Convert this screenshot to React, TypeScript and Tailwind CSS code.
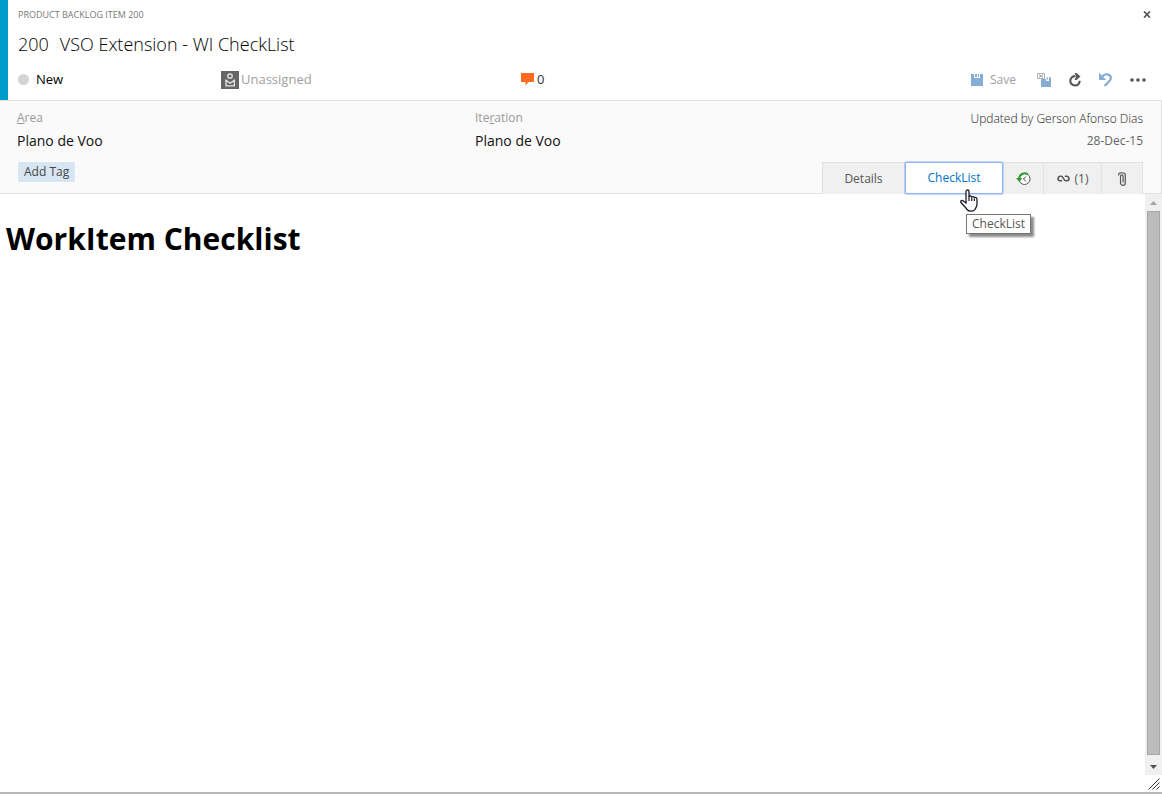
import React from "react";

function UnassignedIcon() {
  return (
    <svg className="size-[18px] shrink-0" viewBox="0 0 18 18" aria-hidden="true">
      <rect width="18" height="18" fill="#666" />
      <circle cx="9" cy="5" r="2.2" fill="none" stroke="#e8e8e8" strokeWidth="1.3" />
      <path d="M5 9.300v5.500h8.300V9.300L9.100 12.200z" fill="none" stroke="#e8e8e8" strokeWidth="1.3" />
    </svg>
  );
}

function CommentIcon() {
  return (
    <svg className="h-[13px] w-[14px] shrink-0" viewBox="0 0 14 13" aria-hidden="true">
      <path d="M0 0h13v9H7.500L4.500 12.500V9H0z" fill="#ff6a1f" />
    </svg>
  );
}

function SaveIcon() {
  return (
    <svg className="size-3" viewBox="0 0 12 12" shapeRendering="crispEdges" aria-hidden="true">
      <path d="M0 0h3v4h6V0h2l1 1v11H0z" fill="#86add3" />
      <path d="M4 0h2v3H4zM7 0h1v3H7z" fill="#86add3" />
      <path d="M6 0h1v2H6z" fill="#fff" />
    </svg>
  );
}

function SaveCloseIcon() {
  return (
    <svg className="size-[14px]" viewBox="0 0 14 14" aria-hidden="true">
      <path d="M4 6h5v2h3V4h1l1 1v9H4z" fill="#86add3" />
      <path d="M9.500 4.500h1.500v2H9.500z" fill="#86add3" />
      <path d="M.5.500h7v5h-7z" fill="#fff" stroke="#b0b0b0" />
      <path d="M2 1.500l4 3M6 1.500l-4 3" stroke="#a0a0a0" />
    </svg>
  );
}

function RefreshIcon() {
  return (
    <svg className="size-[14px]" viewBox="0 0 14 14" aria-hidden="true">
      <path d="M7.500 3.200A4.700 4.700 0 1 0 11.700 7.800" fill="none" stroke="#555" strokeWidth="2.100" />
      <path d="M6.500 0H8.500L12.500 3.400 8.500 7H6.500L8.300 3.500z" fill="#555" />
    </svg>
  );
}

function UndoIcon() {
  return (
    <svg className="size-[14px]" viewBox="0 0 14 14" aria-hidden="true">
      <path d="M2.500 4.300C5 1.200 8.500.500 10.600 2.300c2.100 1.800 1.400 4-.4 5.900L5.500 13" fill="none" stroke="#86add3" strokeWidth="2.300" />
      <path d="M.5.500V6.500H6.500L4.500 4.800 2.500 3z" fill="#86add3" stroke="#86add3" />
    </svg>
  );
}

function HistoryIcon() {
  return (
    <svg className="h-[14px] w-[15px]" viewBox="0 0 15 14" aria-hidden="true">
      <circle cx="8.500" cy="7" r="5.500" fill="#fff" stroke="#555" />
      <path d="M12 2.500A5.500 5.500 0 0 0 3.200 7" fill="none" stroke="#339933" strokeWidth="2" />
      <path d="M0 6h6.500L3.300 10z" fill="#339933" />
      <path d="M10 4.500L7.500 7 10 9.500" fill="none" stroke="#444" />
    </svg>
  );
}

function LinkIcon() {
  return (
    <svg className="h-[7px] w-[13px]" viewBox="0 0 13 7" aria-hidden="true">
      <path
        d="M5.200 5.700H3.200A2.200 2.200 0 0 1 3.200 1.300H4.300C6.500 1.300 6.500 5.700 8.700 5.700H9.800A2.200 2.200 0 0 0 9.800 1.300H7.800"
        fill="none"
        stroke="#555"
        strokeWidth="1.600"
      />
    </svg>
  );
}

function PaperclipIcon() {
  return (
    <svg className="h-[14px] w-2" viewBox="0 0 8 14" aria-hidden="true">
      <path d="M.7 3.500V2.200C.7.200 7.300.200 7.300 2.700v7.800c0 3.700-4.800 3.700-4.800 0V4.300c0-1.800 2.600-1.800 2.600 0V10.500" fill="none" stroke="#555" strokeWidth="1.200" />
    </svg>
  );
}

function HandPointer() {
  return (
    <svg className="h-6 w-[18px]" viewBox="0 0 18 24" aria-hidden="true">
      <path
        d="M6 14V2.500c0-2 3-2 3 0V8c0-1.500 2.700-1.300 2.700.5 0-1.500 2.700-1.200 2.700.8 0-1.300 2.600-1.200 2.600.9V15c0 3-1.500 4-2 5.500-1 1.800-6 2.500-8 0C6 18.500 3 16 1 13.500c-.8-1.300.5-2.500 2-1.800z"
        fill="#fff"
        stroke="#1a1a2a"
        strokeWidth="1.300"
      />
      <path d="M9 7.500V12M11.700 8.500V12M14.400 9.500V12" stroke="#1a1a2a" strokeWidth="1.200" />
    </svg>
  );
}

function Header() {
  return (
    <header className="flex h-[100px] border-l-8 border-[#009ccc] pr-4 pl-[10px]">
      <div className="flex min-w-0 flex-1 flex-col">
        <div className="flex h-[29px] items-center justify-between">
          <span className="text-[9px] text-[#777]">PRODUCT BACKLOG ITEM 200</span>
          <button type="button" aria-label="Close" className="-mr-[9px] p-1">
            <svg className="h-[7px] w-2" viewBox="0 0 8 7" aria-hidden="true">
              <path d="M1 .5l6 6M7 .5l-6 6" stroke="#555" strokeWidth="1.700" />
            </svg>
          </button>
        </div>
        <h1 className="flex h-[30px] items-center gap-[11px] text-[18px] font-light text-black">
          <span>200</span>
          <span>VSO Extension - WI CheckList</span>
        </h1>
        <div className="flex h-[41px] items-center">
          <button type="button" className="flex w-[203px] items-center gap-[7px] text-[13px] text-black">
            <span className="size-[11px] rounded-full bg-[#d4d4d4]" />
            New
          </button>
          <button type="button" className="flex w-[300px] items-center gap-[2px] text-[13px] text-[#a0a0a0]">
            <UnassignedIcon />
            Unassigned
          </button>
          <button type="button" aria-label="Comments" className="flex items-center gap-[2px] text-[13px] text-[#333]">
            <CommentIcon />
            0
          </button>
          <div className="ml-auto flex items-center">
            <button type="button" className="mr-[21px] flex items-center gap-[7px] text-xs text-[#a0a0a0]">
              <SaveIcon />
              Save
            </button>
            <div className="flex items-center gap-[17px]">
              <button type="button" aria-label="Save and close"><SaveCloseIcon /></button>
              <button type="button" aria-label="Refresh"><RefreshIcon /></button>
              <button type="button" aria-label="Undo"><UndoIcon /></button>
              <button type="button" aria-label="More actions">
                <svg className="h-1 w-4" viewBox="0 0 16 4" fill="#555" aria-hidden="true">
                  <circle cx="2" cy="2" r="1.800" />
                  <circle cx="8" cy="2" r="1.800" />
                  <circle cx="14" cy="2" r="1.800" />
                </svg>
              </button>
            </div>
          </div>
        </div>
      </div>
    </header>
  );
}

const tabBase = "flex h-8 items-center justify-center border-t border-r border-[#e2e2e2] bg-[#f0f0f0] text-[#555]";

function Tabs() {
  return (
    <nav role="tablist" className="-mb-px flex text-xs">
      <button type="button" role="tab" aria-selected="false" className={`${tabBase} w-[83px] border-l`}>
        Details
      </button>
      <div className="relative">
        <button
          type="button"
          role="tab"
          aria-selected="true"
          className="flex h-8 w-[98px] items-center justify-center rounded-xs border border-[#8fb5f5] bg-white text-[#0072c6] ring-1 ring-[#8fb5f5]/50"
        >
          CheckList
        </button>
        <div className="pointer-events-none absolute top-[27px] left-[55px] z-20">
          <HandPointer />
        </div>
        <div
          role="tooltip"
          className="absolute top-[52px] left-[61px] z-10 flex h-5 items-center border border-[#767676] bg-white px-[5px] text-[#575757] shadow-[3px_3px_2px_rgba(0,0,0,0.45)]"
        >
          CheckList
        </div>
      </div>
      <button type="button" role="tab" aria-selected="false" aria-label="History" className={`${tabBase} w-[41px]`}>
        <HistoryIcon />
      </button>
      <button type="button" role="tab" aria-selected="false" aria-label="Links (1)" className={`${tabBase} w-[58px] gap-[5px]`}>
        <LinkIcon />
        (1)
      </button>
      <button type="button" role="tab" aria-selected="false" aria-label="Attachments" className={`${tabBase} w-[41px]`}>
        <PaperclipIcon />
      </button>
    </nav>
  );
}

function Details() {
  return (
    <section className="flex h-[94px] justify-between border-y border-r border-[#e2e2e2] bg-[#fafafa] pr-[18px] pl-[17px]">
      <div className="flex flex-col pt-2">
        <div className="flex">
          <dl className="w-[458px]">
            <dt className="text-xs leading-[18px] text-[#999]"><u>A</u>rea</dt>
            <dd className="pt-1 text-[14px] leading-5 text-[#111]">Plano de Voo</dd>
          </dl>
          <dl>
            <dt className="text-xs leading-[18px] text-[#999]">Ite<u>r</u>ation</dt>
            <dd className="pt-1 text-[14px] leading-5 text-[#111]">Plano de Voo</dd>
          </dl>
        </div>
        <button type="button" className="mt-[10px] flex h-[22px] items-center self-start border border-white bg-[#d7e6f2] px-[6px] text-xs text-[#444]">
          Add Tag
        </button>
      </div>
      <div className="flex flex-col items-end justify-between pt-2">
        <div className="text-right text-xs text-[#666]">
          <p className="leading-5 font-light text-[#222]">Updated by Gerson Afonso Dias</p>
          <p className="pt-[2px] leading-5">28-Dec-15</p>
        </div>
        <Tabs />
      </div>
    </section>
  );
}

function ScrollBar() {
  return (
    <div className="flex w-[17px] shrink-0 flex-col bg-[#f0f0f0]">
      <button type="button" aria-label="Scroll up" className="flex h-[17px] items-center justify-center">
        <svg className="h-1 w-[7px]" viewBox="0 0 7 4" aria-hidden="true"><path d="M0 4L3.500 0 7 4z" fill="#a3a3a3" /></svg>
      </button>
      <div className="mx-[2px] mb-[3px] flex-1 border border-[#a8a8a8] bg-[#bcbcbc]" />
      <button type="button" aria-label="Scroll down" className="flex h-[17px] items-center justify-center">
        <svg className="h-1 w-[7px]" viewBox="0 0 7 4" aria-hidden="true"><path d="M0 0h7L3.500 4z" fill="#505050" /></svg>
      </button>
    </div>
  );
}

export default function App() {
  return (
    <div className="flex min-h-screen flex-col border-b-2 border-[#b8b8b8] bg-white font-['Open_Sans','Noto_Sans',sans-serif]">
      <Header />
      <Details />
      <main className="flex flex-1">
        <div className="flex-1 pt-[23px] pl-[6px]">
          <h2 className="text-[30px] leading-[44px] font-bold text-black">WorkItem Checklist</h2>
        </div>
        <ScrollBar />
      </main>
      <footer className="flex h-[17px] items-center justify-end pr-[2px]">
        <svg className="size-3" viewBox="0 0 12 12" fill="none" stroke="#333" aria-hidden="true">
          <path d="M.5 11.500l11-11M4.500 11.500l7-7M8.500 11.500l3-3" />
        </svg>
      </footer>
    </div>
  );
}
